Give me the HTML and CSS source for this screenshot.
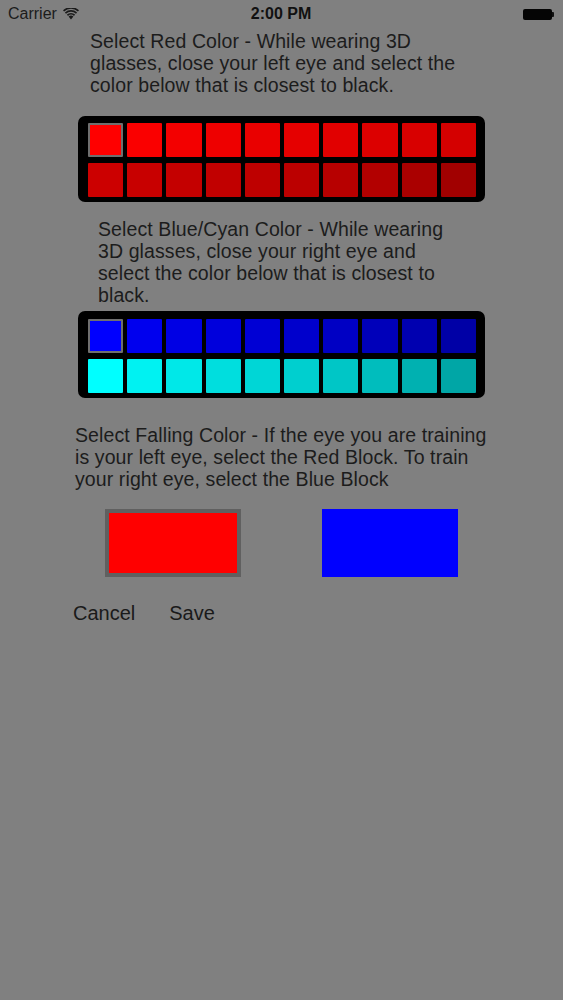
FILE: index.html
```html
<!DOCTYPE html>
<html>
<head>
<meta charset="utf-8">
<link rel="stylesheet" href="styles.css">
</head>
<body>
<div class="status">
  <div class="status-left">
    <span class="carrier">Carrier</span>
    <svg class="wifi" width="16" height="12" viewBox="0 0 16 12">
      <path d="M8 11.5 L5.6 8.6 A3.6 3.6 0 0 1 10.4 8.6 Z" fill="#1a1a1a"/>
      <path d="M3.9 6.6 A6.2 6.2 0 0 1 12.1 6.6 L11.0 7.9 A4.5 4.5 0 0 0 5.0 7.9 Z" fill="#1a1a1a"/>
      <path d="M1.9 4.4 A9.2 9.2 0 0 1 14.1 4.4 L13.0 5.7 A7.5 7.5 0 0 0 3.0 5.7 Z" fill="#1a1a1a"/>
      <path d="M0 2.2 A12 12 0 0 1 16 2.2 L14.9 3.5 A10.3 10.3 0 0 0 1.1 3.5 Z" fill="#1a1a1a"/>
    </svg>
  </div>
  <div class="status-time">2:00 PM</div>
  <div class="status-right">
    <div class="battery"><div class="battery-body"></div><div class="battery-nub"></div></div>
  </div>
</div>

<main class="content">
  <p class="instr instr-red">Select Red Color - While wearing 3D glasses, close your left eye and select the color below that is closest to black.</p>

  <div class="panel panel-red">
    <div class="grid">
      <div class="cell selected" style="background:#ff0000"></div>
      <div class="cell" style="background:#fa0000"></div>
      <div class="cell" style="background:#f30000"></div>
      <div class="cell" style="background:#ee0000"></div>
      <div class="cell" style="background:#e90000"></div>
      <div class="cell" style="background:#e50000"></div>
      <div class="cell" style="background:#e10000"></div>
      <div class="cell" style="background:#dc0000"></div>
      <div class="cell" style="background:#d80000"></div>
      <div class="cell" style="background:#d40000"></div>
      <div class="cell" style="background:#cc0000"></div>
      <div class="cell" style="background:#c80000"></div>
      <div class="cell" style="background:#c40000"></div>
      <div class="cell" style="background:#c10000"></div>
      <div class="cell" style="background:#be0000"></div>
      <div class="cell" style="background:#bb0000"></div>
      <div class="cell" style="background:#b70000"></div>
      <div class="cell" style="background:#b20000"></div>
      <div class="cell" style="background:#aa0000"></div>
      <div class="cell" style="background:#a10000"></div>
    </div>
  </div>

  <p class="instr instr-blue">Select Blue/Cyan Color - While wearing 3D glasses, close your right eye and select the color below that is closest to black.</p>

  <div class="panel panel-blue">
    <div class="grid">
      <div class="cell selected" style="background:#0000ff"></div>
      <div class="cell" style="background:#0000ee"></div>
      <div class="cell" style="background:#0000e4"></div>
      <div class="cell" style="background:#0000dc"></div>
      <div class="cell" style="background:#0000d4"></div>
      <div class="cell" style="background:#0000cc"></div>
      <div class="cell" style="background:#0000c4"></div>
      <div class="cell" style="background:#0000ba"></div>
      <div class="cell" style="background:#0000b0"></div>
      <div class="cell" style="background:#0000a6"></div>
      <div class="cell" style="background:#00ffff"></div>
      <div class="cell" style="background:#00f2f2"></div>
      <div class="cell" style="background:#00e8e8"></div>
      <div class="cell" style="background:#00dede"></div>
      <div class="cell" style="background:#00d6d6"></div>
      <div class="cell" style="background:#00cfcf"></div>
      <div class="cell" style="background:#00c6c6"></div>
      <div class="cell" style="background:#00bdbd"></div>
      <div class="cell" style="background:#00b1b1"></div>
      <div class="cell" style="background:#00a6a6"></div>
    </div>
  </div>

  <p class="instr instr-fall">Select Falling Color - If the eye you are training is your left eye, select the Red Block. To train your right eye, select the Blue Block</p>

  <div class="blocks">
    <div class="block block-red selected-block"></div>
    <div class="block block-blue"></div>
  </div>

  <div class="actions">
    <span class="btn btn-cancel">Cancel</span>
    <span class="btn btn-save">Save</span>
  </div>
</main>
</body>
</html>
```

FILE: styles.css
```css
html, body {
  margin: 0;
  padding: 0;
}
body {
  background: #808080;
  width: 563px;
  height: 1000px;
  font-family: "Liberation Sans", Arial, sans-serif;
  color: #1c1c1c;
}
.status {
  height: 28px;
  display: grid;
  grid-template-columns: 1fr auto 1fr;
  align-items: center;
  padding: 0 9px 0 8px;
  font-size: 16px;
}
.status-left {
  display: flex;
  align-items: center;
  gap: 6px;
}
.carrier {
  color: #1c1c1c;
}
.wifi {
  display: block;
  margin-top: -1px;
}
.status-time {
  font-weight: bold;
  font-size: 16px;
  color: #111;
}
.status-right {
  display: flex;
  justify-content: flex-end;
}
.battery {
  display: flex;
  align-items: center;
}
.battery-body {
  width: 29px;
  height: 11px;
  background: #050505;
  border-radius: 2px;
}
.battery-nub {
  width: 2px;
  height: 5px;
  background: #111;
  border-radius: 0 1px 1px 0;
}
.content {
  display: flex;
  flex-direction: column;
}
.instr {
  margin: 0;
  font-size: 19.5px;
  line-height: 22px;
  color: #1c1c1c;
  letter-spacing: 0.1px;
}
.instr-red {
  margin-top: 2px;
  margin-left: 90px;
  width: 378px;
}
.panel {
  background: #000;
  border-radius: 7px;
  width: 388px;
  padding: 7px 9px 5px 10px;
  margin-left: 78px;
}
.panel-red {
  margin-top: 20px;
}
.panel-blue {
  margin-top: 5px;
  padding-top: 8px;
}
.grid {
  display: grid;
  grid-template-columns: repeat(10, 1fr);
  grid-auto-rows: 34px;
  column-gap: 4px;
  row-gap: 6px;
}
.cell {
  box-sizing: border-box;
  border-radius: 1px;
}
.cell.selected {
  border: 2px solid #6f6f6f;
}
.instr-blue {
  margin-top: 16px;
  margin-left: 98px;
  width: 352px;
}
.instr-fall {
  margin-top: 26px;
  margin-left: 75px;
  width: 418px;
}
.blocks {
  display: flex;
  margin-top: 19px;
  margin-left: 105px;
  gap: 81px;
}
.block {
  width: 136px;
  height: 68px;
  box-sizing: border-box;
}
.block-red {
  background: #ff0000;
  border: 4px solid #606060;
}
.block-blue {
  background: #0000ff;
}
.actions {
  display: flex;
  margin-top: 24px;
  margin-left: 73px;
  gap: 34px;
}
.btn {
  font-size: 20px;
  line-height: 24px;
  color: #1a1a1a;
}
```
